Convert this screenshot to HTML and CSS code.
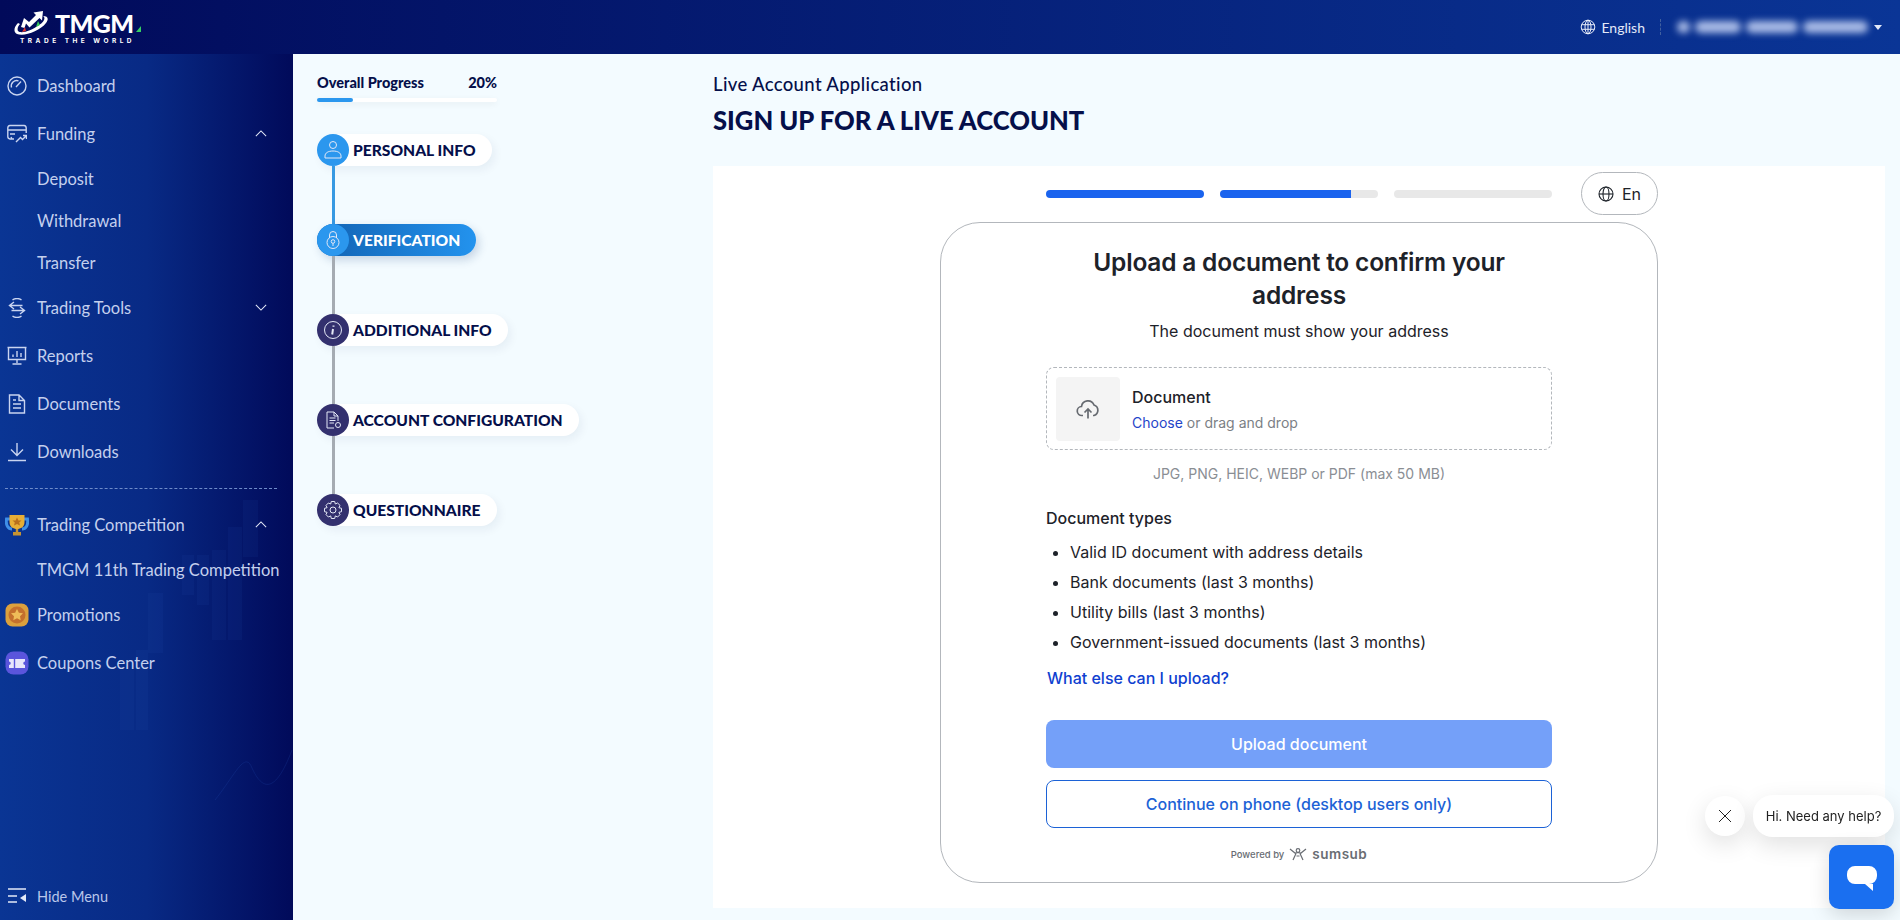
FILE: index.html
```html
<!DOCTYPE html>
<html lang="en">
<head>
    <meta charset="UTF-8">
    <meta name="viewport" content="width=device-width, initial-scale=1.0">
    <title>TMGM - Live Account Application</title>
    <link rel="stylesheet" href="styles.css">
</head>
<body>
    <header class="topbar">
        <div class="logo">
            <div class="logo-row">
                <svg class="logo-mark" viewBox="0 0 36 26" width="36" height="26">
                    <path d="M5 13C1 17 0 22 4 24C11 27 27 21 33 13C36 9 35 6 30 6C33 8 31 12 26 15C18 21 8 24 5 21C4 19 5 16 7 14Z" fill="#fff"/>
                    <path d="M8 17L11 8L16 12L23 5L20.500 2.500L30 1L29 10.500L26.500 8L16.500 17.500L13 13.500L11.500 18Z" fill="#fff"/>
                    <path d="M9 22L12 17L13 21Z" fill="#e0322b"/>
                    <path d="M23 17L25 11L27 15Z" fill="#35c759"/>
                </svg>
                <div class="logo-name">TMGM<i class="logo-dot"></i></div>
            </div>
            <div class="logo-tag">TRADE THE WORLD</div>
        </div>
        <div class="topbar-right">
            <svg class="lang-icon" viewBox="0 0 16 16" width="16" height="16">
                <circle cx="8" cy="8" r="6.800"/><ellipse cx="8" cy="8" rx="3" ry="6.800"/><path d="M1.500 5.700H14.500M1.500 10.300H14.500M8 1V15"/>
            </svg>
            <span class="lang-name">English</span>
            <span class="topbar-sep"></span>
            <span class="account-blur"><i class="b1"></i><i class="b2"></i><i class="b3"></i><i class="b4"></i></span>
            <i class="caret"></i>
        </div>
    </header>

    <div class="layout">
        <aside class="sidebar">
            <svg class="candles" viewBox="0 0 293 440" width="293" height="440">
                <g fill="#2a56b8" opacity="0.09">
                    <rect x="243" y="70" width="15" height="57"/><rect x="228" y="97" width="14" height="113"/>
                    <rect x="212" y="120" width="14" height="90"/><rect x="197" y="125" width="12" height="50"/>
                    <rect x="182" y="125" width="12" height="40"/><rect x="148" y="163" width="15" height="60"/>
                    <rect x="120" y="240" width="14" height="60"/><rect x="136" y="220" width="12" height="80"/>
                </g>
                <path d="M215 370C235 345 245 320 252 338C262 360 275 365 292 320" fill="none" stroke="#2a56b8" stroke-opacity="0.2"/>
            </svg>
            <nav class="nav">
                <a class="nav-item">
                    <svg class="nav-icon" viewBox="0 0 20 20"><circle cx="10" cy="10" r="9"/><path d="M4.500 11.500A5.500 5.500 0 0 1 11.500 4.800M9 11L14 5.500"/></svg>
                    Dashboard
                </a>
                <a class="nav-item">
                    <svg class="nav-icon" viewBox="0 0 20 20"><path d="M7 15H3A2.500 2.500 0 0 1 .8 12.500V4A2.500 2.500 0 0 1 3 1.500H17A2.500 2.500 0 0 1 19.200 4V9M1 6H19M3 10H8M4 13L5 15M9 18L13.500 13.500L15.500 15.500L19.500 11.500M16 11.500H19.500V15"/></svg>
                    Funding
                    <svg class="chevron" viewBox="0 0 14 8"><path d="M1 7L7 1L13 7"/></svg>
                </a>
                <a class="sub-item">Deposit</a>
                <a class="sub-item">Withdrawal</a>
                <a class="sub-item">Transfer</a>
                <a class="nav-item">
                    <svg class="nav-icon" viewBox="0 0 20 20"><path d="M5.500 1.800A9 9 0 0 1 14.500 1.800M14.500 18.200A9 9 0 0 1 5.500 18.200M7 4L2.500 7.500L7 11M2.500 7.500H15.500M13 9L17.500 12.500L13 16M17.500 12.500H4.500"/></svg>
                    Trading Tools
                    <svg class="chevron" viewBox="0 0 14 8"><path d="M1 1L7 7L13 1"/></svg>
                </a>
                <a class="nav-item">
                    <svg class="nav-icon" viewBox="0 0 20 20"><path d="M.5 1.500H19.500M1.500 1.500V13.500H18.500V1.500M10 13.500V17M5.500 18H14.500M6 11V8.500M10 11V5M14 11V7"/></svg>
                    Reports
                </a>
                <a class="nav-item">
                    <svg class="nav-icon" viewBox="0 0 20 20"><path d="M2.500 1H12L17.500 6.500V19H2.500ZM12 1V6.500H17.500M6 10H14M6 14H14M6 6H9"/></svg>
                    Documents
                </a>
                <a class="nav-item">
                    <svg class="nav-icon" viewBox="0 0 20 20"><path d="M10 1V13M4 7.500L10 13.500L16 7.500M1 18.500H19"/></svg>
                    Downloads
                </a>
                <div class="nav-divider"></div>
                <a class="nav-item">
                    <svg class="nav-badge" viewBox="0 0 24 24">
                        <path d="M5 6H1.500C.5 12 3 16 7 16M19 6H22.500C23.500 12 21 16 17 16" fill="none" stroke="#3f8fe8" stroke-width="3"/>
                        <path d="M4.500 2H19.500V9C19.500 14 15.500 16 12 16C8.500 16 4.500 14 4.500 9Z" fill="#e7ae36"/>
                        <path d="M12 4.500L13.400 7.500H16.500L14.200 9.500L15 12.500L12 10.900L9 12.500L9.800 9.500L7.500 7.500H10.600Z" fill="#b86f1d"/>
                        <path d="M10.800 16H13.200V19H16V22.500H8V19H10.800Z" fill="#c79433"/>
                    </svg>
                    Trading Competition
                    <svg class="chevron" viewBox="0 0 14 8"><path d="M1 7L7 1L13 7"/></svg>
                </a>
                <a class="sub-item">TMGM 11th Trading Competition</a>
                <a class="nav-item">
                    <svg class="nav-badge" viewBox="0 0 24 24">
                        <rect x="0.500" y="0.500" width="23" height="23" rx="7" fill="#dba03d"/>
                        <circle cx="12" cy="12" r="8.500" fill="#c4702d"/>
                        <path d="M12 6L13.900 9.700L18 10.300L15 13.200L15.700 17.300L12 15.300L8.300 17.300L9 13.200L6 10.300L10.100 9.700Z" fill="#efbd58"/>
                    </svg>
                    Promotions
                </a>
                <a class="nav-item">
                    <svg class="nav-badge" viewBox="0 0 24 24">
                        <rect x="0.500" y="0.500" width="23" height="23" rx="8" fill="#5a55dc"/>
                        <path d="M4 8H20V10.500A1.700 1.700 0 0 0 20 14V17H4V14A1.700 1.700 0 0 0 4 10.500Z" fill="#e8e6fb"/>
                        <path d="M9.500 8V17" stroke="#5a55dc" stroke-width="1.400"/>
                    </svg>
                    Coupons Center
                </a>
            </nav>
            <a class="hide-menu">
                <svg class="hide-icon" viewBox="0 0 18 15"><path class="hide-lines" d="M0 1H18M0 8H9M0 14H9"/><path d="M18 6V14L12 10Z"/></svg>
                Hide Menu
            </a>
        </aside>

        <section class="steps">
            <div class="progress-head"><span>Overall Progress</span><span>20%</span></div>
            <div class="progress-track"><div class="progress-fill"></div></div>
            <div class="step-list">
                <div class="step step-done">
                    <span class="step-circle circle-blue"><svg viewBox="0 0 20 20"><circle cx="10" cy="5" r="3.500"/><path d="M2 18V16C2 13 5 11 10 11C15 11 18 13 18 16V18Z"/></svg></span>
                    <span class="step-label">PERSONAL INFO</span>
                </div>
                <div class="step-line line-blue"></div>
                <div class="step step-active">
                    <span class="step-circle circle-blue"><svg viewBox="0 0 20 20"><circle cx="10" cy="12.500" r="6"/><path d="M6.500 8V5A3.500 3.500 0 0 1 13.500 5V8"/><circle cx="10" cy="11.500" r="1.800"/><path d="M10 13.300V16"/></svg></span>
                    <span class="step-label">VERIFICATION</span>
                </div>
                <div class="step-line"></div>
                <div class="step">
                    <span class="step-circle"><svg viewBox="0 0 20 20"><circle cx="10" cy="10" r="8.500"/><path d="M10.500 5.500V6.800M10 9L9.200 14.500" stroke-width="2"/></svg></span>
                    <span class="step-label">ADDITIONAL INFO</span>
                </div>
                <div class="step-line"></div>
                <div class="step">
                    <span class="step-circle"><svg viewBox="0 0 20 20"><path d="M4 2H11L15 6V11M4 2V18H11M11 2V6H15M6.500 8H12.500M6.500 10.500H12.500M6.500 13H11"/><circle cx="15" cy="15" r="2.500"/></svg></span>
                    <span class="step-label">ACCOUNT CONFIGURATION</span>
                </div>
                <div class="step-line"></div>
                <div class="step">
                    <span class="step-circle"><svg viewBox="0 0 20 20"><circle cx="10" cy="10" r="3"/><path d="M8.300 1.500H11.700L12.300 4L14.600 3L17 5.400L15.900 7.700L18.500 8.300V11.700L15.900 12.300L17 14.600L14.600 17L12.300 15.900L11.700 18.500H8.300L7.700 15.900L5.400 17L3 14.600L4.100 12.300L1.500 11.700V8.300L4.100 7.700L3 5.400L5.400 3L7.700 4Z"/></svg></span>
                    <span class="step-label">QUESTIONNAIRE</span>
                </div>
            </div>
        </section>

        <main class="content">
            <div class="page-sub">Live Account Application</div>
            <h1 class="page-title">SIGN UP FOR A LIVE ACCOUNT</h1>

            <div class="panel">
                <div class="panel-top">
                    <div class="bars">
                        <div class="bar"><div class="bar-fill"></div></div>
                        <div class="bar"><div class="bar-fill" style="width: 83%"></div></div>
                        <div class="bar"></div>
                    </div>
                    <button class="lang-btn">
                        <svg viewBox="0 0 16 16" width="16" height="16"><circle cx="8" cy="8" r="7"/><ellipse cx="8" cy="8" rx="3" ry="7"/><path d="M1 8H15"/></svg>
                        En
                    </button>
                </div>

                <div class="card">
                    <h2 class="card-title">Upload a document to confirm your address</h2>
                    <p class="card-sub">The document must show your address</p>

                    <div class="dropzone">
                        <div class="drop-icon">
                            <svg viewBox="0 0 24 24" width="24" height="24"><path d="M7 18.500H6A4.500 4.500 0 0 1 5.500 9.500A6.500 6.500 0 0 1 18 8A5.500 5.500 0 0 1 18 18.500H17M12 21.500V12M8.500 15.500L12 12L15.500 15.500"/></svg>
                        </div>
                        <div>
                            <div class="drop-title">Document</div>
                            <div class="drop-text"><a class="drop-link">Choose</a> or drag and drop</div>
                        </div>
                    </div>
                    <p class="hint">JPG, PNG, HEIC, WEBP or PDF (max 50 MB)</p>

                    <div class="types-title">Document types</div>
                    <ul class="types">
                        <li>Valid ID document with address details</li>
                        <li>Bank documents (last 3 months)</li>
                        <li>Utility bills (last 3 months)</li>
                        <li>Government-issued documents (last 3 months)</li>
                    </ul>
                    <a class="what-else">What else can I upload?</a>

                    <button class="btn btn-primary">Upload document</button>
                    <button class="btn btn-outline">Continue on phone (desktop users only)</button>

                    <div class="powered">
                        <span class="powered-by">Powered by</span>
                        <svg viewBox="0 0 18 14" width="18" height="14"><circle cx="9" cy="3.500" r="1.800"/><path d="M1 2L6 6L9 5.500L12 6L17 2M7 6.500L4 13M11 6.500L14 13M7.500 9H10.500" /></svg>
                        <span class="powered-name">sumsub</span>
                    </div>
                </div>
            </div>
        </main>
    </div>

    <div class="chat">
        <div class="chat-row">
            <span class="chat-close"><svg viewBox="0 0 14 14" width="14" height="14"><path d="M1 1L13 13M13 1L1 13"/></svg></span>
            <span class="chat-bubble">Hi. Need any help?</span>
        </div>
        <div class="chat-btn">
            <svg viewBox="0 0 32 32" width="32" height="32"><path d="M9 5H23A8 8 0 0 1 31 13V15A8 8 0 0 1 23 23H27V30L19 23H9A8 8 0 0 1 1 15V13A8 8 0 0 1 9 5Z"/></svg>
        </div>
    </div>
</body>
</html>
```

FILE: styles.css
```css
* {
    box-sizing: border-box;
}
html, body {
    height: 100%;
}
body {
    margin: 0;
    overflow: hidden;
    font-family: "Lato", "Noto Sans", sans-serif;
    background-color: #f3fbff;
    display: flex;
    flex-direction: column;
}

/* top bar */
.topbar {
    height: 54px;
    flex: none;
    display: flex;
    align-items: center;
    justify-content: space-between;
    padding: 0 18px 0 13px;
    background: linear-gradient(90deg, #010a5a 0%, #0a3596 100%);
}
.logo {
    color: white;
}
.logo-row {
    display: flex;
    align-items: flex-start;
    height: 27px;
}
.logo-name {
    position: relative;
    margin-left: 6px;
    padding-right: 8px;
    font-weight: 900;
    font-size: 25px;
    line-height: 26px;
    letter-spacing: -0.6px;
}
.logo-dot {
    position: absolute;
    right: 0;
    top: 16px;
    border-left: 5px solid transparent;
    border-bottom: 6px solid #35d062;
}
.logo-tag {
    margin-left: 7px;
    font-family: "Inter", sans-serif;
    font-weight: 700;
    font-size: 6.500px;
    line-height: 8px;
    letter-spacing: 3.500px;
    white-space: nowrap;
}
.topbar-right {
    display: flex;
    align-items: center;
    color: #e3e9f8;
    font-size: 14px;
}
.lang-icon {
    fill: none;
    stroke: #e8edfa;
    stroke-width: 1;
}
.lang-name {
    margin-left: 5px;
}
.topbar-sep {
    height: 16px;
    margin: 0 16px 0 15px;
    border-left: 1px dashed #41609f;
}
.account-blur {
    display: flex;
    gap: 5px;
    filter: blur(3.500px);
}
.account-blur i {
    height: 12px;
    background: #a9bbe6;
    border-radius: 6px;
}
.account-blur .b1 { width: 13px; }
.account-blur .b2 { width: 46px; }
.account-blur .b3 { width: 52px; }
.account-blur .b4 { width: 65px; }
.caret {
    margin-left: 6px;
    border-left: 4px solid transparent;
    border-right: 4px solid transparent;
    border-top: 5px solid #e3e9f8;
}

.layout {
    flex: 1;
    min-height: 0;
    display: flex;
}

/* left menu */
.sidebar {
    width: 293px;
    flex: none;
    position: relative;
    display: flex;
    flex-direction: column;
    background: linear-gradient(90deg, #0a3594 0%, #082a85 50%, #010a5a 100%);
    color: #c4d0ee;
    font-size: 16.500px;
}
.candles {
    position: absolute;
    left: 0;
    top: 376px;
}
.nav {
    position: relative;
    padding-top: 8px;
}
.nav-item {
    height: 48px;
    display: flex;
    align-items: center;
    padding-left: 37px;
    position: relative;
}
.nav-icon {
    position: absolute;
    left: 7px;
    top: 14px;
    width: 20px;
    height: 20px;
    fill: none;
    stroke: #c9d4f0;
    stroke-width: 1.400;
}
.nav-badge {
    position: absolute;
    left: 5px;
    top: 12px;
    width: 24px;
    height: 24px;
}
.chevron {
    position: absolute;
    left: 255px;
    top: 20px;
    width: 12px;
    height: 7px;
    fill: none;
    stroke: #e3e9f8;
    stroke-width: 1.200;
}
.sub-item {
    height: 42px;
    display: flex;
    align-items: center;
    padding-left: 37px;
    white-space: nowrap;
}
.nav-divider {
    margin: 12px 16px 12px 5px;
    border-top: 1px dashed #6f8cc9;
}
.hide-menu {
    margin-top: auto;
    position: relative;
    height: 48px;
    display: flex;
    align-items: center;
    padding-left: 37px;
    font-size: 14.500px;
    color: #b9c6ea;
}
.hide-icon {
    position: absolute;
    left: 8px;
    top: 16px;
    width: 18px;
    height: 15px;
    fill: #e3e9f8;
}
.hide-lines {
    fill: none;
    stroke: #e3e9f8;
    stroke-width: 1.300;
}

/* progress column */
.steps {
    width: 420px;
    flex: none;
    padding: 20px 0 0 24px;
}
.progress-head {
    width: 180px;
    display: flex;
    justify-content: space-between;
    font-size: 14.500px;
    font-weight: 900;
    line-height: 18px;
    color: #050f4a;
}
.progress-track {
    width: 180px;
    height: 4px;
    margin-top: 6px;
    background: white;
    border-radius: 2px;
    box-shadow: 0 2px 6px rgba(0,0,0,0.06);
}
.progress-fill {
    width: 36px;
    height: 100%;
    background: #2b97ee;
    border-radius: 2px;
}
.step-list {
    margin-top: 32px;
    display: flex;
    flex-direction: column;
    align-items: flex-start;
}
.step {
    height: 32px;
    display: flex;
    align-items: center;
    background: white;
    border-radius: 16px;
    padding-right: 16px;
    box-shadow: 3px 4px 10px rgba(20,40,90,0.06);
}
.step-circle {
    width: 32px;
    height: 32px;
    border-radius: 50%;
    display: flex;
    align-items: center;
    justify-content: center;
    background: #33306e;
}
.circle-blue {
    background: #2b97ee;
}
.step-circle svg {
    width: 20px;
    height: 20px;
    fill: none;
    stroke: #e4e8f6;
    stroke-width: 1;
}
.step-label {
    margin-left: 4px;
    font-size: 15.600px;
    font-weight: 900;
    color: #050f4a;
    white-space: nowrap;
}
.step-active {
    background: linear-gradient(90deg, #1262b2 0%, #2393ee 100%);
    box-shadow: 3px 4px 10px rgba(20,60,120,0.2);
}
.step-active .step-label {
    color: white;
}
.step-line {
    width: 3px;
    height: 58px;
    margin-left: 15px;
    background: #a5abb2;
}
.line-blue {
    background: #3799e2;
}

/* main area */
.content {
    flex: 1;
    min-width: 0;
    padding: 19px 15px 12px 0;
    display: flex;
    flex-direction: column;
}
.page-sub {
    font-size: 18.500px;
    line-height: 22px;
    font-weight: 500;
    letter-spacing: 0.35px;
    color: #050f4a;
}
.page-title {
    margin: 10px 0 0;
    font-size: 25.600px;
    line-height: 30px;
    font-weight: 900;
    color: #050f4a;
}
.panel {
    flex: 1;
    margin-top: 31px;
    padding: 6px 0 25px;
    background: white;
    display: flex;
    flex-direction: column;
    align-items: center;
    font-family: "Inter", sans-serif;
    color: #1d2229;
}
.panel-top {
    width: 718px;
    height: 43px;
    margin-bottom: 7px;
    padding-left: 106px;
    display: flex;
    align-items: center;
    justify-content: space-between;
}
.bars {
    width: 506px;
    display: flex;
    gap: 16px;
}
.bar {
    flex: 1;
    height: 8px;
    border-radius: 4px;
    overflow: hidden;
    background: #e8e8e8;
}
.bar-fill {
    height: 100%;
    background: #1a63ee;
}
.lang-btn {
    width: 77px;
    height: 43px;
    border: 1px solid #b3b7bc;
    border-radius: 22px;
    background: white;
    display: flex;
    align-items: center;
    justify-content: center;
    gap: 8px;
    font-family: inherit;
    font-size: 16px;
    color: #1d2229;
    padding: 0;
}
.lang-btn svg {
    fill: none;
    stroke: #1d2229;
    stroke-width: 1.100;
}
.card {
    width: 718px;
    flex: 1;
    padding: 23px 105px 0;
    border: 1px solid #b3b7bc;
    border-radius: 40px;
}
.card-title {
    margin: 0;
    font-size: 24.500px;
    line-height: 33px;
    font-weight: 600;
    text-align: center;
    padding: 0 30px;
    letter-spacing: -0.2px;
}
.card-sub {
    margin: 7px 0 0;
    font-size: 16px;
    line-height: 24px;
    text-align: center;
}
.dropzone {
    height: 83px;
    margin-top: 24px;
    padding: 0 9px;
    border: 1px dashed #b3b7bc;
    border-radius: 8px;
    display: flex;
    align-items: center;
    gap: 12px;
}
.drop-icon {
    width: 64px;
    height: 64px;
    border-radius: 4px;
    background: #f4f4f4;
    display: flex;
    align-items: center;
    justify-content: center;
}
.drop-icon svg {
    fill: none;
    stroke: #666a70;
    stroke-width: 1.700;
}
.drop-title {
    font-size: 16px;
    line-height: 24px;
    font-weight: 500;
}
.drop-text {
    margin-top: 4px;
    font-size: 14px;
    line-height: 20px;
    color: #7b7f85;
}
.drop-link {
    color: #1f45c9;
}
.hint {
    margin: 14px 0 0;
    font-size: 14px;
    line-height: 20px;
    text-align: center;
    color: #8a8e94;
}
.types-title {
    margin-top: 22px;
    font-size: 16px;
    line-height: 24px;
    font-weight: 500;
}
.types {
    margin: 7px 0 0;
    padding-left: 24px;
    font-size: 16px;
    line-height: 30px;
}
.what-else {
    display: block;
    margin-top: 9px;
    padding-left: 1px;
    font-size: 16px;
    line-height: 24px;
    font-weight: 500;
    color: #0f3fd0;
}
.btn {
    display: block;
    width: 100%;
    height: 48px;
    border-radius: 8px;
    font-family: inherit;
    font-size: 16px;
    font-weight: 500;
}
.btn-primary {
    margin-top: 30px;
    border: none;
    background: #74a0f9;
    color: white;
}
.btn-outline {
    margin-top: 12px;
    border: 1px solid #1c62d6;
    background: white;
    color: #1c62d6;
}
.powered {
    margin-top: 18px;
    display: flex;
    align-items: center;
    justify-content: center;
    gap: 5px;
    color: #696d73;
}
.powered-by {
    font-size: 9.500px;
    font-weight: 500;
}
.powered svg {
    fill: none;
    stroke: #696d73;
    stroke-width: 1.200;
}
.powered-name {
    font-size: 13.500px;
    font-weight: 600;
    letter-spacing: 0.5px;
}

/* chat widget sits over the page */
.chat {
    position: fixed;
    right: 6px;
    bottom: 11px;
    display: flex;
    flex-direction: column;
    align-items: flex-end;
    font-family: "Inter", sans-serif;
}
.chat-row {
    display: flex;
    align-items: center;
    gap: 8px;
    margin-bottom: 8px;
}
.chat-close {
    width: 40px;
    height: 40px;
    border-radius: 50%;
    background: white;
    display: flex;
    align-items: center;
    justify-content: center;
    box-shadow: 0 8px 24px rgba(0,0,0,0.12);
}
.chat-close svg {
    fill: none;
    stroke: #222;
    stroke-width: 1;
}
.chat-bubble {
    width: 141px;
    height: 42px;
    border-radius: 20px;
    background: white;
    font-size: 13px;
    color: #222;
    display: flex;
    align-items: center;
    justify-content: center;
    box-shadow: 0 8px 24px rgba(0,0,0,0.12);
}
.chat-btn {
    width: 65px;
    height: 64px;
    border-radius: 10px;
    background: #1a6ff0;
    display: flex;
    align-items: center;
    justify-content: center;
    box-shadow: 0 6px 20px rgba(0,0,0,0.15);
}
.chat-btn svg {
    fill: white;
}
```
